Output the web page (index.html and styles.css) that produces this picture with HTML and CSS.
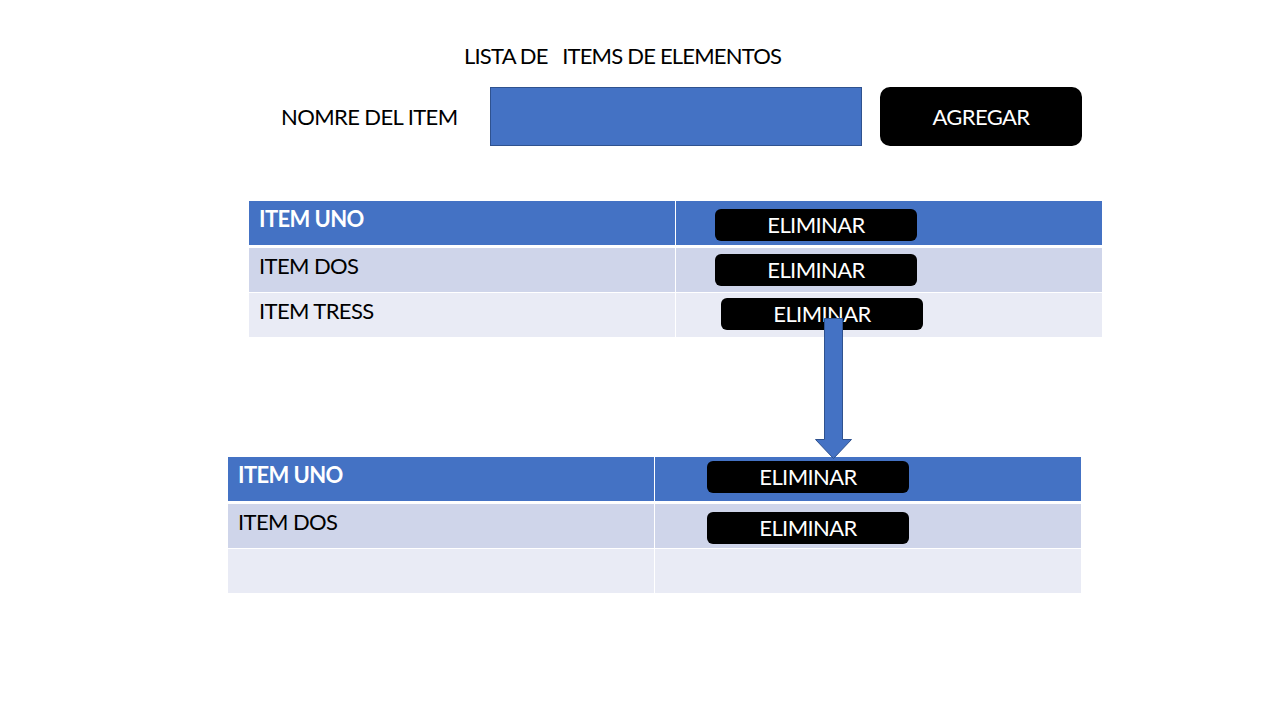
FILE: index.html
```html
<!DOCTYPE html>
<html lang="es">
  <head>
    <meta charset="UTF-8" />
    <meta name="viewport" content="width=device-width, initial-scale=1.0" />
    <title>Lista de items</title>
    <link rel="stylesheet" href="styles.css">
  </head>
  <body>
    <div class="slide">
      <h1 class="title">LISTA DE &nbsp; ITEMS DE ELEMENTOS</h1>

      <div class="form-row">
        <label for="item" class="form-label">NOMRE DEL ITEM</label>
        <input id="item" type="text" class="item-input" autocomplete="off" />
        <button class="add-button">AGREGAR</button>
      </div>

      <div class="item-table table-before">
        <div class="row row-head">
          <div class="cell cell-name">ITEM UNO</div>
          <div class="cell"><button class="del-button off-1">ELIMINAR</button></div>
        </div>
        <div class="row row-odd">
          <div class="cell cell-name">ITEM DOS</div>
          <div class="cell"><button class="del-button off-2">ELIMINAR</button></div>
        </div>
        <div class="row row-even">
          <div class="cell cell-name">ITEM TRESS</div>
          <div class="cell"><button class="del-button off-3">ELIMINAR</button></div>
        </div>
      </div>

      <div class="arrow-gap">
        <svg class="down-arrow" width="38" height="142" viewBox="0 0 38 142">
          <path d="M9.5 0.5 H27.5 V121.5 H36.5 L18.5 140.5 L0.5 121.5 H9.5 Z" fill="#4472C4" stroke="#2F528F" stroke-width="1" />
        </svg>
      </div>

      <div class="item-table table-after">
        <div class="row row-head">
          <div class="cell cell-name">ITEM UNO</div>
          <div class="cell"><button class="del-button off-4">ELIMINAR</button></div>
        </div>
        <div class="row row-odd">
          <div class="cell cell-name">ITEM DOS</div>
          <div class="cell"><button class="del-button off-5">ELIMINAR</button></div>
        </div>
        <div class="row row-even">
          <div class="cell cell-name"></div>
          <div class="cell"></div>
        </div>
      </div>
    </div>
  </body>
</html>
```

FILE: styles.css
```css
* {
  margin: 0;
  padding: 0;
  box-sizing: border-box;
}

body {
  font-family: Lato, "Open Sans", sans-serif;
  background: #ffffff;
  color: #000000;
  width: 1280px;
  height: 720px;
  overflow: hidden;
  letter-spacing: -0.6px;
}

.slide {
  padding-top: 42px;
}

.title {
  font-size: 22px;
  font-weight: 400;
  line-height: 28px;
  margin-left: 464px;
  white-space: pre;
  letter-spacing: -0.8px;
}

.form-row {
  display: flex;
  align-items: center;
  margin-top: 17px;
  margin-left: 281px;
  height: 59px;
}

.form-label {
  width: 209px;
  font-size: 22px;
}

.item-input {
  width: 372px;
  height: 59px;
  background: #4472c4;
  border: 1px solid #2f528f;
  border-radius: 0;
  outline: none;
  font-family: inherit;
  font-size: 22px;
  color: #ffffff;
  padding: 0 10px;
}

.add-button {
  width: 202px;
  height: 59px;
  margin-left: 18px;
  background: #000000;
  color: #ffffff;
  border: none;
  border-radius: 10px;
  font-family: inherit;
  font-size: 22px;
  letter-spacing: -0.6px;
  cursor: pointer;
}

/* tables */
.item-table {
  width: 853px;
}

.table-before {
  margin-top: 55px;
  margin-left: 249px;
}

.table-after {
  margin-left: 228px;
}

.row {
  display: grid;
  grid-template-columns: 426px 1fr;
  column-gap: 1px;
  height: 44px;
  margin-bottom: 1px;
}

.row-head {
  margin-bottom: 3px;
}

.row-head .cell {
  background: #4472c4;
}

.row-head .cell-name {
  color: #ffffff;
  font-weight: 700;
}

.row-odd .cell {
  background: #cfd5ea;
}

.row-even .cell {
  background: #e9ebf5;
}

.cell {
  font-size: 22px;
  line-height: 26px;
}

.cell-name {
  padding: 5px 0 0 10px;
}

.del-button {
  display: block;
  width: 202px;
  height: 32px;
  background: #000000;
  color: #ffffff;
  border: none;
  border-radius: 6px;
  font-family: inherit;
  font-size: 22px;
  line-height: 32px;
  letter-spacing: -0.6px;
  cursor: pointer;
}

.off-1 { margin: 8px 0 0 39px; }
.off-2 { margin: 6px 0 0 39px; }
.off-3 { margin: 5px 0 0 45px; }
.off-4 { margin: 4px 0 0 52px; }
.off-5 { margin: 8px 0 0 52px; }

/* arrow between the two tables */
.arrow-gap {
  position: relative;
  height: 119px;
}

.down-arrow {
  position: absolute;
  top: -20px;
  left: 815px;
}
```
